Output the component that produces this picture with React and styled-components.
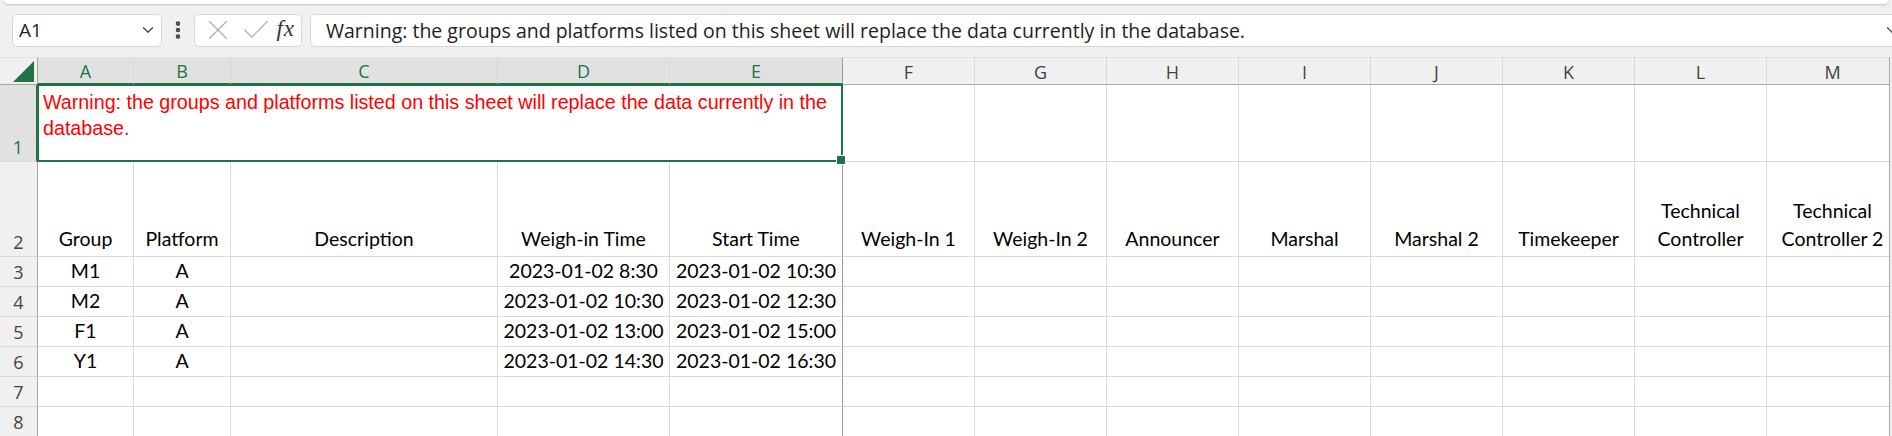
import React from "react";
import styled, { createGlobalStyle, css } from "styled-components";
import { ChevronDown, EllipsisVertical, X, Check } from "lucide-react";

const GlobalStyle = createGlobalStyle`
  html, body {
    margin: 0;
    padding: 0;
    background: #f0f0f0;
  }
  * {
    box-sizing: border-box;
  }
`;

const UI_FONT = `"Open Sans", "Noto Sans", sans-serif`;
const CELL_FONT = `Lato, "Noto Sans", sans-serif`;
const GREEN = "#217346";

const COLS = ["A", "B", "C", "D", "E", "F", "G", "H", "I", "J", "K", "L", "M"];
const WIDTHS = [96, 97, 267, 172, 173, 132, 132, 132, 132, 132, 132, 132, 132];
const SELECTED = 5; // A..E are selected (merged A1:E1)

const HEADINGS = [
  "Group",
  "Platform",
  "Description",
  "Weigh-in Time",
  "Start Time",
  "Weigh-In 1",
  "Weigh-In 2",
  "Announcer",
  "Marshal",
  "Marshal 2",
  "Timekeeper",
  "Technical Controller",
  "Technical Controller 2",
];

const ROWS = [
  ["M1", "A", "", "2023-01-02 8:30", "2023-01-02 10:30"],
  ["M2", "A", "", "2023-01-02 10:30", "2023-01-02 12:30"],
  ["F1", "A", "", "2023-01-02 13:00", "2023-01-02 15:00"],
  ["Y1", "A", "", "2023-01-02 14:30", "2023-01-02 16:30"],
  [],
  [],
];

const WARNING =
  "Warning: the groups and platforms listed on this sheet will replace the data currently in the database.";

const Page = styled.div`
  width: 1892px;
  height: 436px;
  overflow: hidden;
  background: #f0f0f0;
  display: flex;
  flex-direction: column;
`;

const RibbonEdge = styled.div`
  height: 4px;
  margin: 0 4px;
  background: #fff;
  border-radius: 0 0 7px 7px;
  box-shadow: 0 1px 2px rgba(0, 0, 0, 0.18);
`;

const FormulaBar = styled.div`
  display: flex;
  align-items: center;
  height: 53px;
  padding: 0 0 0 12px;
  margin-right: -14px;
`;

const Box = styled.div`
  height: 33px;
  background: #fff;
  border: 1px solid #d6d6d6;
  border-radius: 5px;
  display: flex;
  align-items: center;
  font-family: ${UI_FONT};
  color: #222;
`;

const NameBox = styled(Box)`
  width: 150px;
  padding: 0 4px 0 6px;
  justify-content: space-between;
  font-size: 19px;
  svg {
    color: #444;
  }
`;

const Grip = styled.div`
  width: 32px;
  display: flex;
  justify-content: center;
  color: #444;
`;

const EditBox = styled(Box)`
  width: 108px;
  padding: 0 6px 0 6px;
  justify-content: space-between;
  color: #b4b4b4;
  svg {
    margin-right: -8px;
  }
`;

const Fx = styled.span`
  font-family: "Liberation Serif", "DejaVu Serif", serif;
  font-style: italic;
  font-size: 23px;
  color: #333;
  letter-spacing: 1px;
  margin-top: -3px;
`;

const FormulaInput = styled(Box)`
  flex: 1;
  margin-left: 8px;
  padding: 0 4px 0 15px;
  justify-content: space-between;
  font-size: 19.5px;
  white-space: nowrap;
  svg {
    color: #444;
  }
`;

const Sheet = styled.div`
  display: grid;
  grid-template-columns: 38px ${WIDTHS.map((w) => `${w}px`).join(" ")};
  grid-template-rows: 28px 77px 95px repeat(6, 30px);
  background: #fff;
  width: 1890px;
  border-right: 1px solid #a9a9a9;
  overflow: hidden;
`;

const Corner = styled.div`
  background: #f0f0f0;
  border-top: 1px solid #e2e2e2;
  border-bottom: 1px solid #a6a6a6;
  border-right: 1px solid #a6a6a6;
  position: relative;
  &::after {
    content: "";
    position: absolute;
    right: 3px;
    bottom: 2px;
    width: 0;
    height: 0;
    border-left: 21px solid transparent;
    border-bottom: 21px solid ${GREEN};
  }
`;

const ColHead = styled.div`
  display: flex;
  align-items: center;
  justify-content: center;
  font-family: ${UI_FONT};
  font-size: 18px;
  padding-top: 2px;
  border-top: 1px solid #e2e2e2;
  border-right: 1px solid ${(p) => (p.$freeze ? "#9b9b9b" : "#d8d8d8")};
  ${(p) =>
    p.$selected
      ? css`
          background: #e1e1e1;
          color: ${GREEN};
          border-bottom: 2px solid ${GREEN};
        `
      : css`
          background: #f0f0f0;
          color: #444;
          border-bottom: 1px solid #a6a6a6;
        `}
`;

const RowHead = styled.div`
  display: flex;
  align-items: flex-end;
  justify-content: center;
  padding-bottom: 2px;
  font-family: ${UI_FONT};
  font-size: 18px;
  border-bottom: 1px solid #d8d8d8;
  ${(p) =>
    p.$selected
      ? css`
          background: #e1e1e1;
          color: ${GREEN};
          border-right: 2px solid ${GREEN};
        `
      : css`
          background: #f0f0f0;
          color: #444;
          border-right: 1px solid #a6a6a6;
        `}
`;

const Cell = styled.div`
  display: flex;
  align-items: ${(p) => (p.$bottom ? "flex-end" : "center")};
  justify-content: center;
  text-align: center;
  padding: 0 2px ${(p) => (p.$bottom ? "3px" : "0")};
  font-family: ${CELL_FONT};
  font-size: 19.5px;
  line-height: 28px;
  color: #000;
  white-space: ${(p) => (p.$wrap ? "normal" : "nowrap")};
  border-right: 1px solid ${(p) => (p.$freeze ? "#9b9b9b" : "#dadada")};
  border-bottom: 1px solid #dadada;
`;

const Merged = styled.div`
  grid-column: 2 / span ${SELECTED};
  position: relative;
  padding: 3px 6px 0 4px;
  font-family: "Liberation Sans", Arial, sans-serif;
  font-size: 19.7px;
  line-height: 26px;
  color: #ff0000;
  border: 2px solid ${GREEN};
  margin: -1px 0 0 -1px;
  &::after {
    content: "";
    position: absolute;
    right: -5px;
    bottom: -5px;
    width: 8px;
    height: 8px;
    background: ${GREEN};
    border: 1px solid #fff;
  }
`;

function FormulaRow() {
  return (
    <FormulaBar>
      <NameBox>
        <span>A1</span>
        <ChevronDown size={18} strokeWidth={1.6} />
      </NameBox>
      <Grip>
        <EllipsisVertical size={22} strokeWidth={3} />
      </Grip>
      <EditBox>
        <X size={34} strokeWidth={0.95} />
        <Check size={34} strokeWidth={0.95} />
        <Fx>fx</Fx>
      </EditBox>
      <FormulaInput>
        <span>{WARNING}</span>
        <ChevronDown size={18} strokeWidth={1.6} />
      </FormulaInput>
    </FormulaBar>
  );
}

export default function App() {
  return (
    <>
      <GlobalStyle />
      <Page>
        <RibbonEdge />
        <FormulaRow />
        <Sheet>
          <Corner />
          {COLS.map((c, i) => (
            <ColHead key={c} $selected={i < SELECTED} $freeze={i === SELECTED - 1}>
              {c}
            </ColHead>
          ))}

          <RowHead $selected>1</RowHead>
          <Merged>{WARNING}</Merged>
          {COLS.slice(SELECTED).map((c) => (
            <Cell key={`1${c}`} />
          ))}

          <RowHead>2</RowHead>
          {HEADINGS.map((h, i) => (
            <Cell key={h} $bottom $wrap $freeze={i === SELECTED - 1}>
              {h}
            </Cell>
          ))}

          {ROWS.map((row, r) => (
            <React.Fragment key={r}>
              <RowHead>{r + 3}</RowHead>
              {COLS.map((c, i) => (
                <Cell key={c} $freeze={i === SELECTED - 1}>
                  {row[i] || ""}
                </Cell>
              ))}
            </React.Fragment>
          ))}
        </Sheet>
      </Page>
    </>
  );
}
